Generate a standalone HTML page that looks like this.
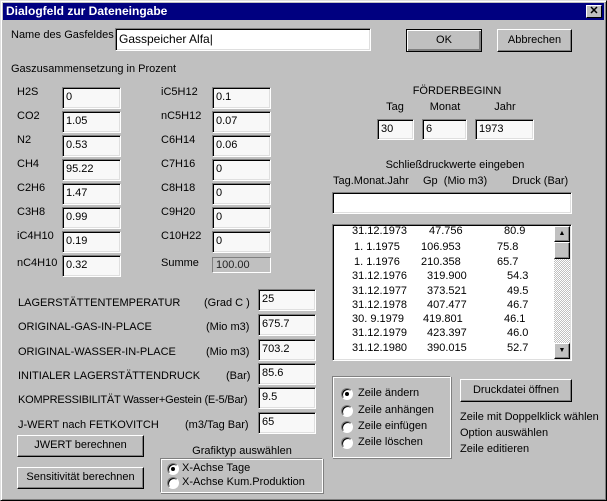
<!DOCTYPE html>
<html><head><meta charset="utf-8"><style>
*{margin:0;padding:0;box-sizing:border-box}
body{width:607px;height:501px;background:#c0c0c0;font-family:"Liberation Sans",sans-serif;font-size:11px;color:#000;position:relative;overflow:hidden}
.win{position:absolute;left:0;top:0;width:607px;height:501px;border:1px solid;border-color:#dfdfdf #000 #000 #dfdfdf;box-shadow:inset 1px 1px #fff,inset -1px -1px #808080}
.tb{position:absolute;left:3px;top:3px;width:601px;height:17px;background:#000080;color:#fff;font-weight:bold;font-size:12px;line-height:17px;padding-left:3px}
.cl{position:absolute;left:586px;top:5px;width:16px;height:13px;background:#c0c0c0;border:1px solid;border-color:#fff #000 #000 #fff;font-size:11px;line-height:10px;text-align:center;font-weight:bold;color:#000}
.a{position:absolute;white-space:nowrap}
.in{position:absolute;background:#f8f8f8;border:1px solid;border-color:#808080 #fff #fff #808080;box-shadow:inset 1px 1px #000,inset -1px -1px #dfdfdf;padding:2px 0 0 3px;font-size:11px;white-space:nowrap;line-height:15px}
.bt{position:absolute;background:#c0c0c0;border:1px solid;border-color:#fff #000 #000 #fff;box-shadow:inset -1px -1px #808080;text-align:center;font-size:11px;white-space:nowrap}
.gb{position:absolute;border:1px solid;border-color:#808080 #fff #fff #808080;box-shadow:inset 1px 1px #fff,1px 1px #808080}
.rd{position:absolute;width:12px;height:12px;border-radius:50%;background:#fff;border:1px solid;border-color:#808080 #fff #fff #808080;box-shadow:inset 1px 1px #000}
.rd.on::after{content:"";position:absolute;left:3px;top:3px;width:4px;height:4px;border-radius:50%;background:#000}
.c{transform:translateX(-50%)}
</style></head><body>
<div class="win"></div>
<div class="tb">Dialogfeld zur Dateneingabe</div>
<div class="cl">✕</div>

<div class="a" style="left:11px;top:29px">Name des Gasfeldes</div>
<div class="in" style="left:115px;top:28px;width:256px;height:23px;font-size:12px;padding-top:3px;background:#fff">Gasspeicher Alfa|</div>
<div class="bt" style="left:406px;top:29px;width:76px;height:23px;line-height:20px;border-color:#000;box-shadow:inset 1px 1px #fff,inset -2px -2px #808080">OK</div>
<div class="bt" style="left:497px;top:29px;width:75px;height:23px;line-height:20px">Abbrechen</div>

<div class="a" style="left:11px;top:63px">Gaszusammensetzung in Prozent</div>

<div class="a" style="left:17px;top:86px">H2S</div><div class="in" style="left:62px;top:87px;width:59px;height:22px">0</div>
<div class="a" style="left:17px;top:110px">CO2</div><div class="in" style="left:62px;top:111px;width:59px;height:22px">1.05</div>
<div class="a" style="left:17px;top:134px">N2</div><div class="in" style="left:62px;top:135px;width:59px;height:22px">0.53</div>
<div class="a" style="left:17px;top:158px">CH4</div><div class="in" style="left:62px;top:159px;width:59px;height:22px">95.22</div>
<div class="a" style="left:17px;top:182px">C2H6</div><div class="in" style="left:62px;top:183px;width:59px;height:22px">1.47</div>
<div class="a" style="left:17px;top:206px">C3H8</div><div class="in" style="left:62px;top:207px;width:59px;height:22px">0.99</div>
<div class="a" style="left:17px;top:230px">iC4H10</div><div class="in" style="left:62px;top:231px;width:59px;height:22px">0.19</div>
<div class="a" style="left:17px;top:257px">nC4H10</div><div class="in" style="left:62px;top:255px;width:59px;height:22px">0.32</div>

<div class="a" style="left:161px;top:86px">iC5H12</div><div class="in" style="left:212px;top:87px;width:59px;height:22px">0.1</div>
<div class="a" style="left:161px;top:110px">nC5H12</div><div class="in" style="left:212px;top:111px;width:59px;height:22px">0.07</div>
<div class="a" style="left:161px;top:134px">C6H14</div><div class="in" style="left:212px;top:135px;width:59px;height:22px">0.06</div>
<div class="a" style="left:161px;top:158px">C7H16</div><div class="in" style="left:212px;top:159px;width:59px;height:22px">0</div>
<div class="a" style="left:161px;top:182px">C8H18</div><div class="in" style="left:212px;top:183px;width:59px;height:22px">0</div>
<div class="a" style="left:161px;top:206px">C9H20</div><div class="in" style="left:212px;top:207px;width:59px;height:22px">0</div>
<div class="a" style="left:161px;top:230px">C10H22</div><div class="in" style="left:212px;top:231px;width:59px;height:22px">0</div>
<div class="a" style="left:161px;top:257px">Summe</div><div class="in" style="left:212px;top:257px;width:59px;height:16px;background:#c0c0c0;box-shadow:none;padding-top:0;line-height:14px;color:#222">100.00</div>

<div class="a c" style="left:457px;top:85px">FÖRDERBEGINN</div>
<div class="a c" style="left:395px;top:101px">Tag</div>
<div class="a c" style="left:445px;top:101px">Monat</div>
<div class="a c" style="left:505px;top:101px">Jahr</div>
<div class="in" style="left:377px;top:119px;width:37px;height:21px">30</div>
<div class="in" style="left:422px;top:119px;width:45px;height:21px">6</div>
<div class="in" style="left:475px;top:119px;width:59px;height:21px">1973</div>

<div class="a c" style="left:455px;top:159px">Schließdruckwerte eingeben</div>
<div class="a" style="left:333px;top:175px">Tag.Monat.Jahr</div>
<div class="a" style="left:423px;top:175px">Gp&nbsp;&nbsp;(Mio m3)</div>
<div class="a" style="left:512px;top:175px">Druck (Bar)</div>
<div class="in" style="left:332px;top:192px;width:240px;height:22px;background:#fff"></div>
<div class="in" style="left:332px;top:224px;width:240px;height:137px;background:#fff"></div>
<div style="position:absolute;left:554px;top:226px;width:16px;height:133px;background:repeating-conic-gradient(#c0c0c0 0 25%,#fff 0 50%) 0 0/2px 2px"></div>
<div class="bt" style="left:554px;top:226px;width:16px;height:16px;font-size:7px;line-height:14px">▲</div>
<div class="bt" style="left:554px;top:242px;width:16px;height:17px"></div>
<div class="bt" style="left:554px;top:343px;width:16px;height:16px;font-size:7px;line-height:14px">▼</div>

<div class="a" style="left:352px;top:225px">31.12.1973</div><div class="a" style="left:429px;top:225px">47.756</div><div class="a" style="left:504px;top:225px">80.9</div>
<div class="a" style="left:354px;top:241px">1. 1.1975</div><div class="a" style="left:421px;top:241px">106.953</div><div class="a" style="left:497px;top:241px">75.8</div>
<div class="a" style="left:354px;top:256px">1. 1.1976</div><div class="a" style="left:421px;top:256px">210.358</div><div class="a" style="left:497px;top:256px">65.7</div>
<div class="a" style="left:352px;top:270px">31.12.1976</div><div class="a" style="left:427px;top:270px">319.900</div><div class="a" style="left:507px;top:270px">54.3</div>
<div class="a" style="left:352px;top:285px">31.12.1977</div><div class="a" style="left:427px;top:285px">373.521</div><div class="a" style="left:507px;top:285px">49.5</div>
<div class="a" style="left:352px;top:299px">31.12.1978</div><div class="a" style="left:427px;top:299px">407.477</div><div class="a" style="left:507px;top:299px">46.7</div>
<div class="a" style="left:352px;top:313px">30. 9.1979</div><div class="a" style="left:423px;top:313px">419.801</div><div class="a" style="left:504px;top:313px">46.1</div>
<div class="a" style="left:352px;top:327px">31.12.1979</div><div class="a" style="left:427px;top:327px">423.397</div><div class="a" style="left:507px;top:327px">46.0</div>
<div class="a" style="left:352px;top:342px">31.12.1980</div><div class="a" style="left:427px;top:342px">390.015</div><div class="a" style="left:507px;top:342px">52.7</div>

<div class="a" style="left:18px;top:297px">LAGERSTÄTTENTEMPERATUR</div><div class="a" style="left:204px;top:297px">(Grad C )</div><div class="in" style="left:258px;top:289px;width:58px;height:22px">25</div>
<div class="a" style="left:18px;top:321px">ORIGINAL-GAS-IN-PLACE</div><div class="a" style="left:206px;top:321px">(Mio m3)</div><div class="in" style="left:258px;top:314px;width:58px;height:22px">675.7</div>
<div class="a" style="left:18px;top:346px">ORIGINAL-WASSER-IN-PLACE</div><div class="a" style="left:206px;top:346px">(Mio m3)</div><div class="in" style="left:258px;top:339px;width:58px;height:22px">703.2</div>
<div class="a" style="left:18px;top:370px">INITIALER LAGERSTÄTTENDRUCK</div><div class="a" style="left:226px;top:370px">(Bar)</div><div class="in" style="left:258px;top:363px;width:58px;height:22px">85.6</div>
<div class="a" style="left:18px;top:394px;letter-spacing:-0.2px">KOMPRESSIBILITÄT Wasser+Gestein (E-5/Bar)</div><div class="in" style="left:258px;top:387px;width:58px;height:22px">9.5</div>
<div class="a" style="left:18px;top:419px">J-WERT nach FETKOVITCH</div><div class="a" style="left:185px;top:419px">(m3/Tag Bar)</div><div class="in" style="left:258px;top:412px;width:58px;height:22px">65</div>

<div class="bt" style="left:17px;top:435px;width:127px;height:22px;line-height:19px">JWERT berechnen</div>
<div class="bt" style="left:17px;top:467px;width:127px;height:22px;line-height:19px">Sensitivität berechnen</div>
<div class="a c" style="left:242px;top:445px">Grafiktyp auswählen</div>
<div class="gb" style="left:160px;top:458px;width:163px;height:35px"></div>
<div class="rd on" style="left:167px;top:463px"></div><div class="a" style="left:182px;top:462px">X-Achse Tage</div>
<div class="rd" style="left:167px;top:477px"></div><div class="a" style="left:182px;top:476px">X-Achse Kum.Produktion</div>

<div class="gb" style="left:332px;top:376px;width:119px;height:82px"></div>
<div class="rd on" style="left:341px;top:388px"></div><div class="a" style="left:358px;top:387px">Zeile ändern</div>
<div class="rd" style="left:341px;top:405px"></div><div class="a" style="left:358px;top:404px">Zeile anhängen</div>
<div class="rd" style="left:341px;top:421px"></div><div class="a" style="left:358px;top:420px">Zeile einfügen</div>
<div class="rd" style="left:341px;top:437px"></div><div class="a" style="left:358px;top:436px">Zeile löschen</div>

<div class="bt" style="left:460px;top:379px;width:112px;height:23px;line-height:20px">Druckdatei öffnen</div>
<div class="a" style="left:460px;top:411px">Zeile mit Doppelklick wählen</div>
<div class="a" style="left:460px;top:427px">Option auswählen</div>
<div class="a" style="left:460px;top:443px">Zeile editieren</div>
</body></html>
